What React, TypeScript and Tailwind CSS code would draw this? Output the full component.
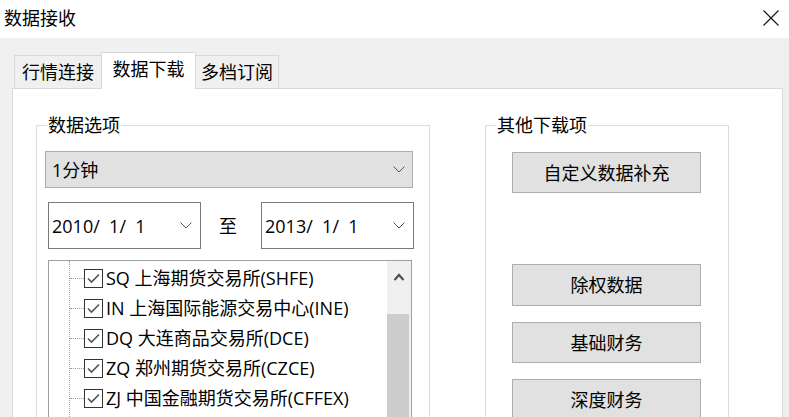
import React from "react";

const exchanges = [
  "SQ 上海期货交易所(SHFE)",
  "IN 上海国际能源交易中心(INE)",
  "DQ 大连商品交易所(DCE)",
  "ZQ 郑州期货交易所(CZCE)",
  "ZJ 中国金融期货交易所(CFFEX)",
];

function Chevron() {
  return (
    <svg width="12" height="7" viewBox="0 0 12 7" className="shrink-0">
      <polyline points="0.5,0.5 6,6 11.5,0.5" fill="none" stroke="#555" strokeWidth="1" />
    </svg>
  );
}

function CheckBox() {
  return (
    <div className="w-[19px] h-[19px] border border-[#333] bg-white flex items-center justify-center shrink-0">
      <svg width="13" height="11" viewBox="0 0 13 11">
        <polyline points="1,5.5 4.5,9 12,1.5" fill="none" stroke="#555" strokeWidth="1.6" />
      </svg>
    </div>
  );
}

function GroupBox({ label, className, children }: { label: string; className: string; children: React.ReactNode }) {
  return (
    <div className={`relative border border-[#dcdcdc] ${className}`}>
      <div className="absolute -top-[11px] left-[10px] bg-white px-[1px] leading-[20px] text-[18px]">{label}</div>
      {children}
    </div>
  );
}

function Button({ label, className }: { label: string; className: string }) {
  return (
    <div
      className={`ml-[26px] w-[189px] bg-[#e1e1e1] border border-[#adadad] flex items-center justify-center text-[18px] leading-none ${className}`}
    >
      {label}
    </div>
  );
}

export default function App() {
  return (
    <div className="w-[789px] h-[417px] overflow-hidden bg-[#f0f0f0] text-black font-['Open_Sans','Noto_Sans_CJK_SC',sans-serif]">
      {/* Title bar */}
      <div className="h-[38px] bg-white flex items-center justify-between pl-[4px] pr-[10px] pb-[2px]">
        <span className="text-[18px] leading-none">数据接收</span>
        <svg width="16" height="16" viewBox="0 0 16 16">
          <path d="M0.5 0.5 L15.5 15.5 M15.5 0.5 L0.5 15.5" stroke="#111" strokeWidth="1.1" />
        </svg>
      </div>

      <div className="pt-[14px] pl-[12px]">
        {/* Tabs */}
        <div className="flex items-end h-[36px] pl-[2px]">
          <div className="w-[87px] h-[33px] border-t border-l border-[#d9d9d9] bg-[#f0f0f0] flex items-center justify-center text-[18px] leading-none">
            行情连接
          </div>
          <div className="relative z-10 w-[95px] h-[37px] -mb-px border-t border-l border-r border-[#d9d9d9] bg-white flex items-center justify-center pb-[4px] text-[18px] leading-none">
            数据下载
          </div>
          <div className="w-[83px] h-[33px] border-t border-r border-[#d9d9d9] bg-[#f0f0f0] flex items-center justify-center text-[18px] leading-none">
            多档订阅
          </div>
        </div>

        {/* Panel */}
        <div className="w-[771px] h-[400px] bg-white border border-[#d9d9d9] flex items-start pt-[36px] pl-[23px]">
          <GroupBox label="数据选项" className="w-[394px] h-[360px]">
            <div className="ml-[8px] mt-[25px] w-[368px] h-[37px] bg-[#e1e1e1] border border-[#adadad] flex items-center justify-between pl-[6px] pr-[7px]">
              <span className="text-[18px] leading-none">1分钟</span>
              <Chevron />
            </div>

            <div className="mt-[14px] ml-[11px] flex items-center">
              <div className="w-[153px] h-[47px] border border-[#7a7a7a] flex items-center justify-between pl-[3px] pr-[8px]">
                <span className="text-[18px] leading-none whitespace-pre">2010/  1/  1</span>
                <Chevron />
              </div>
              <div className="w-[60px] pr-[6px] text-center text-[18px] leading-none">至</div>
              <div className="w-[153px] h-[47px] border border-[#7a7a7a] flex items-center justify-between pl-[3px] pr-[8px]">
                <span className="text-[18px] leading-none whitespace-pre">2013/  1/  1</span>
                <Chevron />
              </div>
            </div>

            {/* Tree */}
            <div className="mt-[11px] ml-[11px] w-[364px] h-[200px] border border-[#a0a0a0] flex">
              <div className="flex-1 flex">
                <div className="w-[20px] shrink-0" />
                <div className="flex-1 border-l border-dotted border-[#a0a0a0] pt-[2px]">
                  {exchanges.map((name) => (
                    <div key={name} className="h-[30px] flex items-center">
                      <div className="w-[14px] border-t border-dotted border-[#a0a0a0]" />
                      <CheckBox />
                      <span className="ml-[3px] text-[18px] leading-none whitespace-nowrap">{name}</span>
                    </div>
                  ))}
                </div>
              </div>
              <div className="w-[24px] bg-[#f0f0f0] flex flex-col shrink-0">
                <div className="h-[53px] flex justify-center pt-[12px]">
                  <svg width="12" height="8" viewBox="0 0 12 8">
                    <polyline points="1.5,7 6,2 10.5,7" fill="none" stroke="#505050" strokeWidth="2.2" />
                  </svg>
                </div>
                <div className="flex-1 bg-[#cdcdcd] mr-[2px]" />
              </div>
            </div>
          </GroupBox>

          <GroupBox label="其他下载项" className="ml-[55px] w-[244px] h-[360px]">
            <Button label="自定义数据补充" className="mt-[26px] h-[41px]" />
            <Button label="除权数据" className="mt-[71px] h-[42px]" />
            <Button label="基础财务" className="mt-[16px] h-[41px]" />
            <Button label="深度财务" className="mt-[16px] h-[41px]" />
          </GroupBox>
        </div>
      </div>
    </div>
  );
}
